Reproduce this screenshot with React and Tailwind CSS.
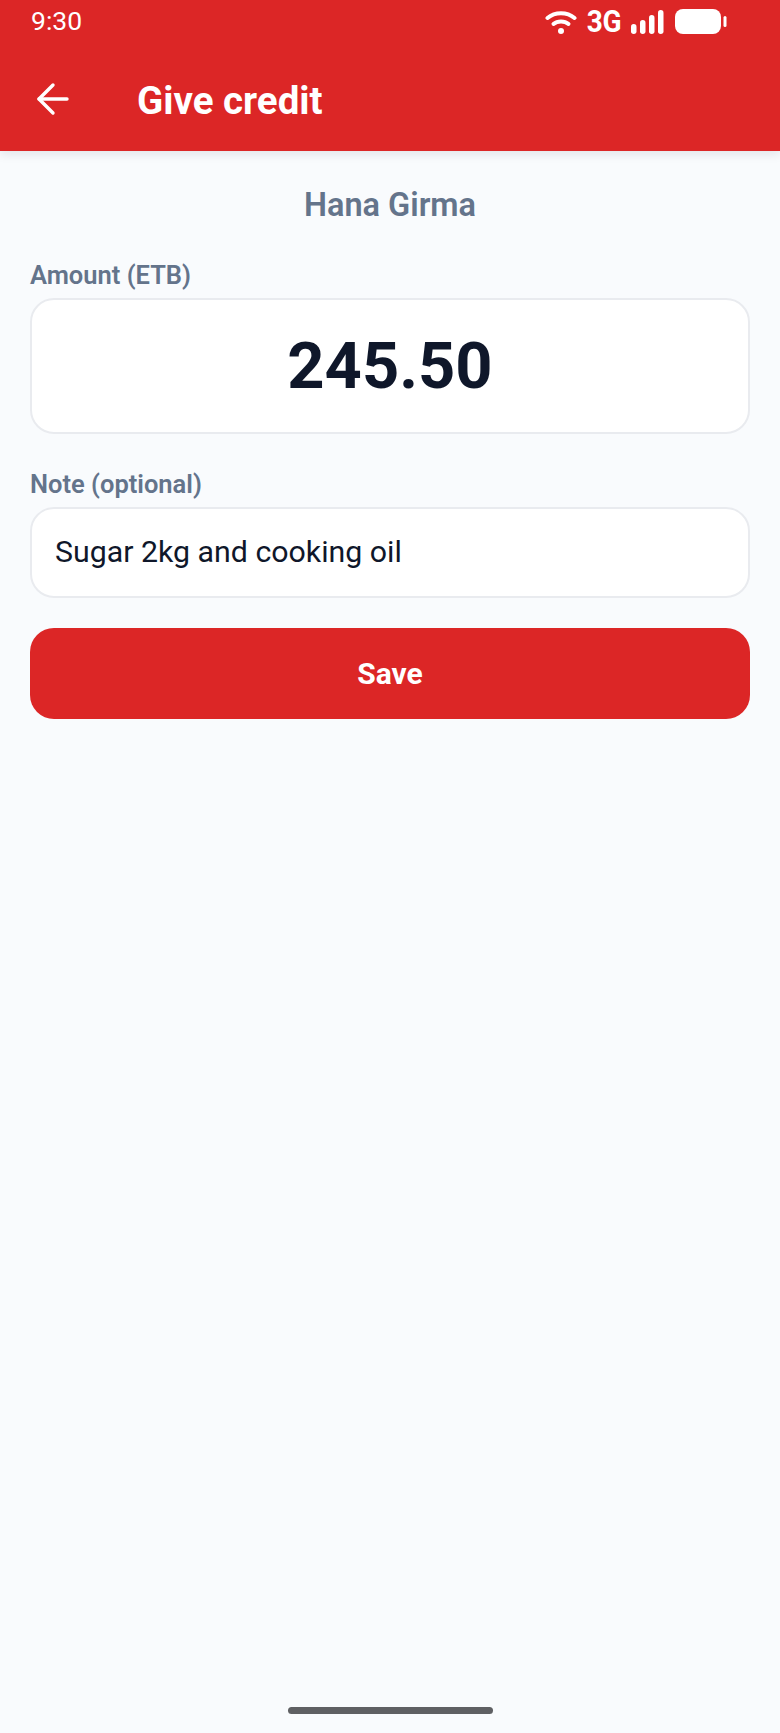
import { ArrowLeft } from 'lucide-react'

function StatusIcons() {
  return (
    <div className="flex items-center text-white">
      <svg width="32" height="26" viewBox="0 0 32 26" fill="none" stroke="currentColor" strokeLinecap="round" strokeWidth="4">
        <path d="M2.5 9C10 2.5 22 2.5 29.500 9" />
        <path d="M8.500 15C12.500 11.500 19.500 11.500 23.500 15" />
        <circle cx="16" cy="22" r="3" fill="currentColor" stroke="none" />
      </svg>
      <span className="ml-[10px] inline-block scale-y-[1.15] text-[28px] leading-none font-bold tracking-[-0.5px]">3G</span>
      <svg className="ml-[10px]" width="33" height="24" viewBox="0 0 33 24" fill="currentColor">
        <rect x="0" y="14" width="5.500" height="10" rx="2.700" />
        <rect x="9" y="10" width="5.500" height="14" rx="2.700" />
        <rect x="18" y="5" width="5.500" height="19" rx="2.700" />
        <rect x="27" y="0" width="5.500" height="24" rx="2.700" />
      </svg>
      <svg className="ml-[11px]" width="52" height="26" viewBox="0 0 52 26" fill="currentColor">
        <rect x="0" y="0" width="46" height="25" rx="8" />
        <rect x="48.500" y="7" width="3" height="11" rx="1.500" />
      </svg>
    </div>
  )
}

export default function App() {
  return (
    <div className="relative h-[1733px] w-[780px] overflow-hidden bg-[#f9fbfd] font-['Roboto',sans-serif]">
      <header className="h-[151px] bg-[#dc2626] shadow-[0_3px_10px_rgba(15,23,42,0.1)]">
        <div className="flex h-[45px] items-center justify-between pr-[53px] pb-[2px] pl-[31px]">
          <span className="text-[26.500px] leading-none text-white">9:30</span>
          <StatusIcons />
        </div>
        <div className="flex h-[106px] items-center pl-[29px]">
          <ArrowLeft size={48} strokeWidth={1.7} className="mt-[2px] text-white" />
          <h1 className="mt-[6px] ml-[60px] text-[38.500px] leading-none font-bold text-white">Give credit</h1>
        </div>
      </header>

      <main className="flex flex-col px-[30px]">
        <div className="mt-[35px] text-center text-[32.500px] leading-[38px] font-semibold text-[#64748b]">Hana Girma</div>

        <label className="mt-[36px] text-[25.500px] leading-[30px] font-semibold text-[#64748b]">Amount (ETB)</label>
        <div className="mt-[8px] flex h-[136px] items-center justify-center rounded-[24px] border-2 border-[#e9ebef] bg-white">
          <span className="text-[65px] leading-none font-bold text-[#0f172a]">245.50</span>
        </div>

        <label className="mt-[35px] text-[25.500px] leading-[30px] font-semibold text-[#64748b]">Note (optional)</label>
        <div className="mt-[8px] flex h-[91px] items-center rounded-[24px] border-2 border-[#e9ebef] bg-white px-[23px]">
          <span className="text-[30.300px] leading-none text-[#0f172a]">Sugar 2kg and cooking oil</span>
        </div>

        <button className="mt-[30px] flex h-[91px] items-center justify-center rounded-[24px] bg-[#dc2626] text-[30px] font-bold text-white">
          Save
        </button>
      </main>

      <div className="absolute bottom-[19px] left-[288px] h-[7px] w-[205px] rounded-full bg-[#5f6063]" />
    </div>
  )
}
